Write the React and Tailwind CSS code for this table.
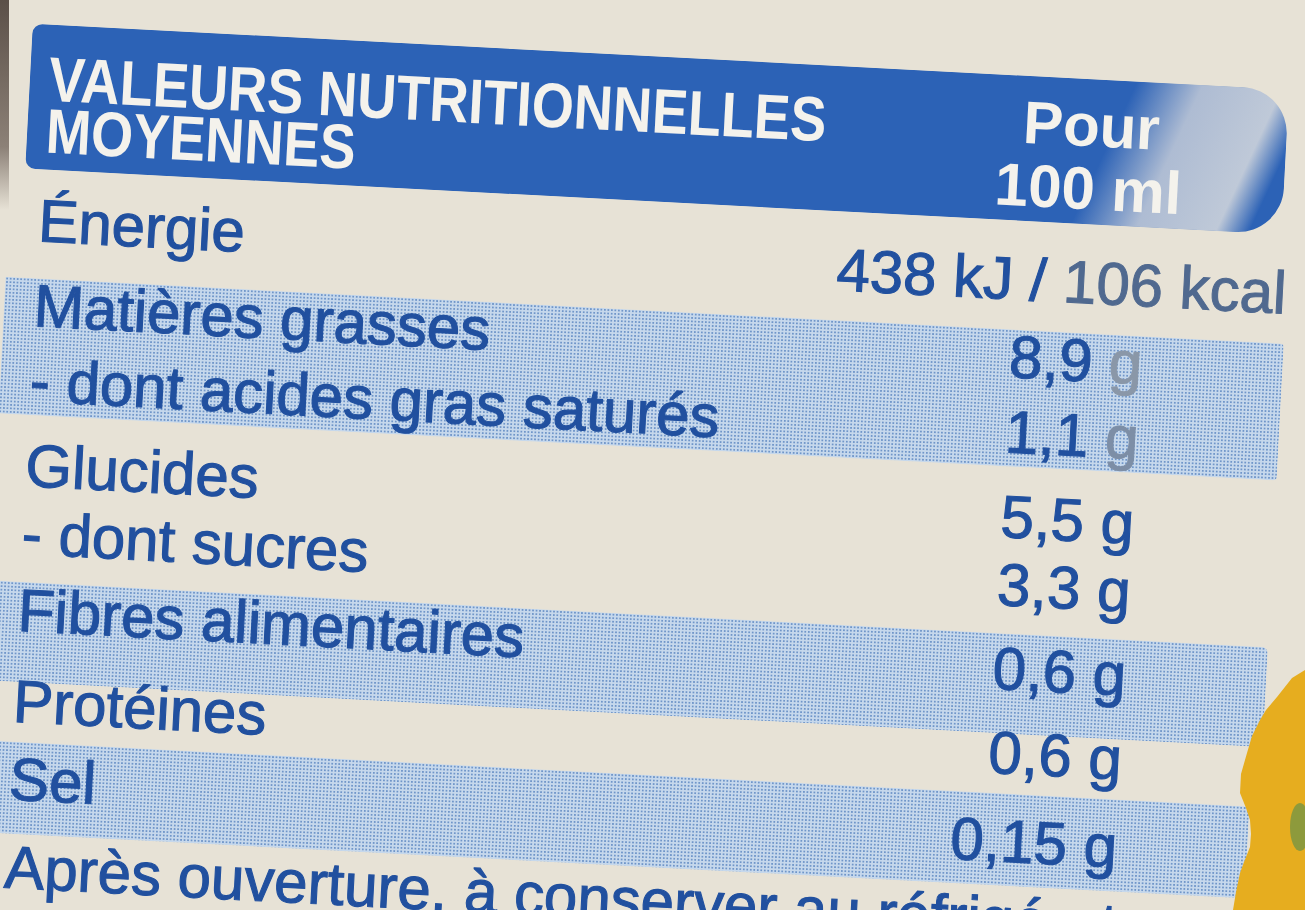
import React from "react";

const ink = "text-[#21509f] [-webkit-text-stroke:1.1px_#21509f]";
const band =
  "bg-[#c6d8ec] bg-[radial-gradient(circle,#7096c9_0.95px,transparent_1.25px)] bg-[length:3.5px_3.5px]";

function Row({ label, value, labelClass = "", valueClass = "" }) {
  return (
    <div className="flex items-start justify-between whitespace-nowrap">
      <span className={labelClass}>{label}</span>
      <span className={valueClass}>{value}</span>
    </div>
  );
}

export default function App() {
  return (
    <div className="relative h-[910px] w-[1305px] overflow-hidden bg-[#e7e2d6] font-['Liberation_Sans',Arial,sans-serif]">
      <div className={`w-[1305px] origin-top-left rotate-[3deg] pt-[22px] text-[60px] leading-[46px] ${ink}`}>
        {/* header band */}
        <div className="ml-[34px] flex h-[145px] w-[1258px] items-start justify-between rounded-l-[10px] rounded-r-[46px] bg-[#2c62b6] bg-[linear-gradient(112deg,#2c62b6_84%,#aebcd3_89%,#bfc9d8_95%,#2c62b6_97.5%)] font-bold text-[#f4f2ec] [-webkit-text-stroke:0px]">
          <div className="origin-left scale-x-[0.86] whitespace-nowrap pl-[22px] pt-[28px] text-[63px] leading-[52px]">
            <p>VALEURS NUTRITIONNELLES</p>
            <p>MOYENNES</p>
          </div>
          <div className="pr-[102px] pt-[15px] text-center text-[60px] leading-[63px]">
            <p>Pour</p>
            <p>100 ml</p>
          </div>
        </div>

        {/* energie */}
        <div className="h-[109px] pl-[50px] pr-[5px]">
          <Row
            label="Énergie"
            labelClass="pt-[29px]"
            value={
              <>
                438 kJ /{" "}
                <span className="text-[#50698f] [-webkit-text-stroke:1px_#50698f]">106 kcal</span>
              </>
            }
            valueClass="pt-[36px]"
          />
        </div>

        {/* matieres grasses */}
        <div className={`ml-[20px] h-[137px] w-[1280px] rounded-r-[4px] pl-[30px] pr-[140px] pt-[5px] ${band}`}>
          <Row
            label="Matières grasses"
            value={
              <>
                8,9 <span className="text-[#8a97a8] [-webkit-text-stroke:1px_#8a97a8]">g</span>
              </>
            }
          />
          <div className="mt-[29px]">
            <Row
              label="- dont acides gras saturés"
              value={
                <>
                  1,1 <span className="text-[#7d8ea6] [-webkit-text-stroke:1px_#7d8ea6]">g</span>
                </>
              }
            />
          </div>
        </div>

        {/* glucides */}
        <div className="h-[167px] pl-[50px] pr-[145px] pt-[28px]">
          <Row label="Glucides" value="5,5 g" />
          <div className="mt-[22px]">
            <Row label="- dont sucres" value="3,3 g" />
          </div>
        </div>

        {/* fibres */}
        <div className={`ml-[20px] h-[100px] w-[1280px] rounded-r-[6px] pl-[30px] pr-[140px] pt-[6px] ${band}`}>
          <Row label="Fibres alimentaires" value="0,6 g" valueClass="pt-[7px]" />
        </div>

        {/* proteines */}
        <div className="h-[60px] pl-[50px] pr-[145px] leading-[40px]">
          <Row label="Protéines" value="0,6 g" />
        </div>

        {/* sel */}
        <div className={`ml-[20px] h-[92px] w-[1270px] rounded-r-[6px] pl-[30px] pr-[130px] pt-[15px] ${band}`}>
          <Row label="Sel" value="0,15 g" valueClass="pt-[10px]" />
        </div>

        <p className="whitespace-nowrap pl-[50px] pt-[11px]">
          Après ouverture, à conserver au réfrigérateur
        </p>
      </div>

      {/* packaging edge + yellow graphic */}
      <div className="absolute left-0 top-0 h-[210px] w-[9px] bg-[linear-gradient(180deg,#5b5048,#8c8177_70%,transparent)]" />
      <svg className="absolute bottom-0 right-0" width="75" height="240" viewBox="0 0 75 240">
        <path
          d="M75 0 L62 8 L47 27 L36 40 L30 50 L22 66 L17 83 L11 104 L10 123 L16 138 L20 150 L21 164 L20 177 L14 192 L10 203 L6 222 L3 240 L75 240 Z"
          fill="#e6ad1f"
        />
        <ellipse cx="70" cy="157" rx="10" ry="24" fill="#8d9a3c" />
      </svg>
    </div>
  );
}
